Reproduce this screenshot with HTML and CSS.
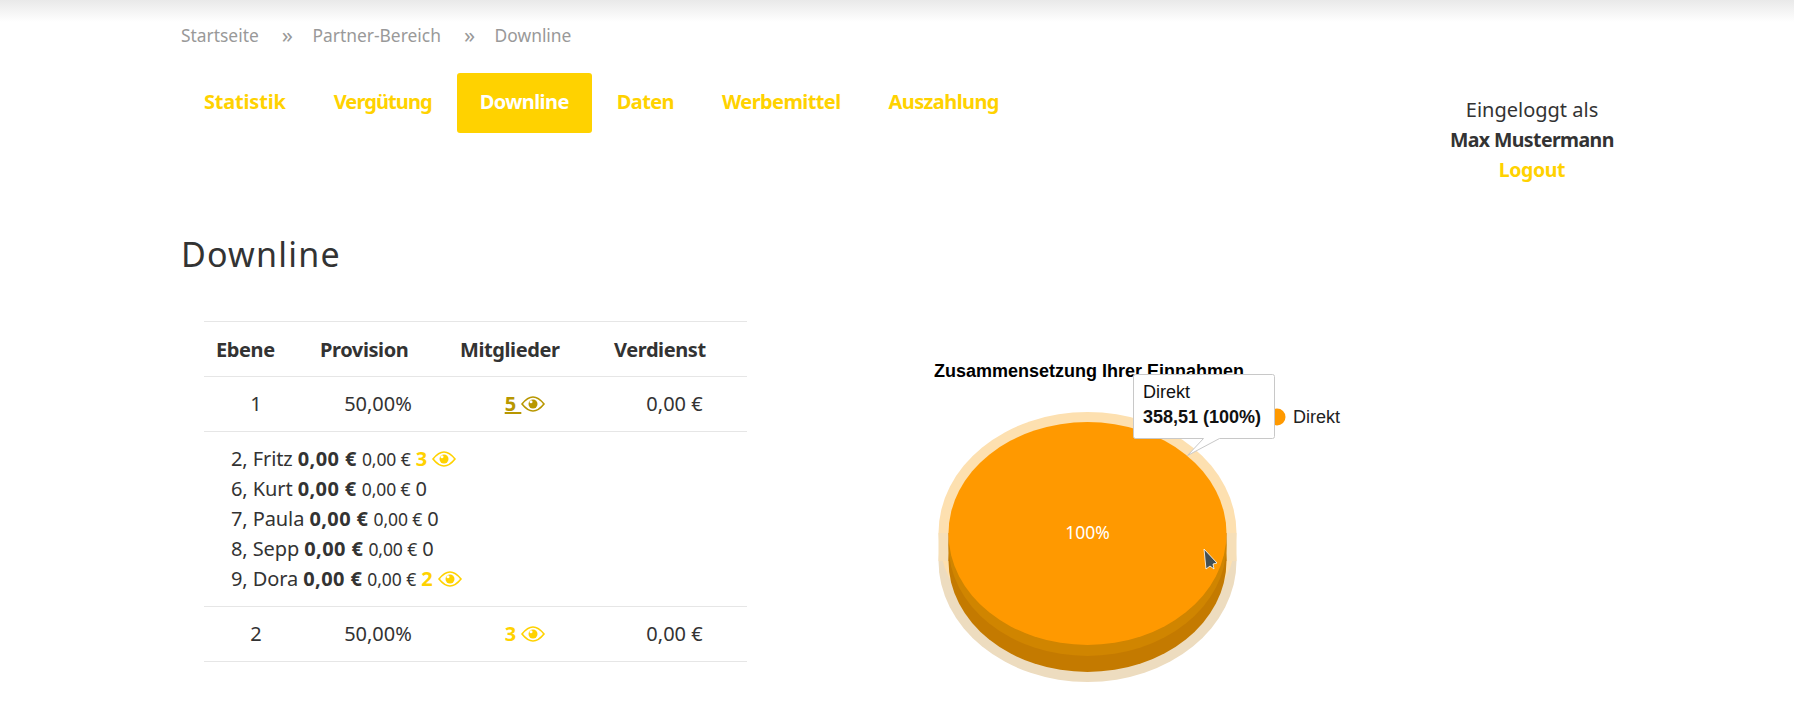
FILE: index.html
```html
<!DOCTYPE html>
<html>
<head>
    <meta charset="UTF-8">
    <title>Downline</title>
    <link rel="stylesheet" href="styles.css">
</head>
<body>
<div class="top-shadow"></div>
<div class="page">
    <div class="breadcrumb">
        <a>Startseite</a><span class="sep">»</span><a>Partner-Bereich</a><span class="sep">»</span><a>Downline</a>
    </div>
    <div class="head-row">
        <ul class="nav">
            <li>Statistik</li>
            <li>Vergütung</li>
            <li class="active">Downline</li>
            <li>Daten</li>
            <li>Werbemittel</li>
            <li>Auszahlung</li>
        </ul>
        <div class="login">
            <div>Eingeloggt als</div>
            <div class="login-name">Max Mustermann</div>
            <div class="login-out">Logout</div>
        </div>
    </div>
    <h1>Downline</h1>
    <div class="content">
        <table class="levels">
            <tr>
                <th class="col1">Ebene</th>
                <th class="col2">Provision</th>
                <th class="col3">Mitglieder</th>
                <th class="col4">Verdienst</th>
            </tr>
            <tr>
                <td>1</td>
                <td>50,00%</td>
                <td><a class="count hover"><u>5 </u><svg class="eye" viewBox="0 0 24 16"><use href="#eye"/></svg></a></td>
                <td>0,00 €</td>
            </tr>
            <tr>
                <td colspan="4" class="members">
                    <div>2, Fritz <b>0,00 €</b> <small>0,00 €</small> <a class="count">3 <svg class="eye" viewBox="0 0 24 16"><use href="#eye"/></svg></a></div>
                    <div>6, Kurt <b>0,00 €</b> <small>0,00 €</small> 0</div>
                    <div>7, Paula <b>0,00 €</b> <small>0,00 €</small> 0</div>
                    <div>8, Sepp <b>0,00 €</b> <small>0,00 €</small> 0</div>
                    <div>9, Dora <b>0,00 €</b> <small>0,00 €</small> <a class="count">2 <svg class="eye" viewBox="0 0 24 16"><use href="#eye"/></svg></a></div>
                </td>
            </tr>
            <tr>
                <td>2</td>
                <td>50,00%</td>
                <td><a class="count">3 <svg class="eye" viewBox="0 0 24 16"><use href="#eye"/></svg></a></td>
                <td>0,00 €</td>
            </tr>
        </table>
        <!-- viewBox uses page coordinates, chart starts at 880/320 -->
        <svg class="chart" viewBox="880 320 500 380">
            <text class="chart-title" x="934" y="377">Zusammensetzung Ihrer Einnahmen</text>

            <!-- halo -->
            <ellipse cx="1087.5" cy="561" rx="149" ry="121" fill="#eddcbf"/>
            <ellipse cx="1087.5" cy="533" rx="149" ry="121" fill="#fde0b0"/>
            <rect x="938.5" y="533" width="298" height="28" fill="#f6dfb8"/>
            <!-- side -->
            <ellipse cx="1087.5" cy="561" rx="139" ry="111" fill="#c47a00"/>
            <rect x="948.5" y="533" width="278" height="28" fill="#c47a00"/>
            <ellipse cx="1087.5" cy="545" rx="139" ry="111" fill="#d08500"/>
            <!-- top -->
            <ellipse cx="1087.5" cy="533.5" rx="139" ry="111.5" fill="#ff9900"/>
            <text class="pie-label" x="1087.5" y="539">100%</text>

            <circle cx="1277" cy="417" r="8.5" fill="#ff9900"/>
            <text class="legend" x="1293" y="423">Direkt</text>

            <!-- tooltip -->
            <path class="tip" d="M1135.5 374.5h137a2 2 0 0 1 2 2v60a2 2 0 0 1 -2 2h-53l-32 17 16 -17h-68a2 2 0 0 1 -2 -2v-60a2 2 0 0 1 2 -2z"/>
            <text class="tip-text" x="1143" y="398">Direkt</text>
            <text class="tip-text tip-bold" x="1143" y="423">358,51 (100%)</text>

            <!-- mouse pointer -->
            <path d="M1204 549L1217 563 1213 564 1214 569 1210 566 1206 569z" fill="#445053" stroke="#fff" stroke-width="0.800"/>
        </svg>
    </div>
</div>
<svg class="defs" width="0" height="0">
    <defs>
        <g id="eye">
            <path d="M1 8C5 3 8.500 1 12 1s7 2 11 7c-4 5-7.500 7-11 7S5 13 1 8z" fill="none" stroke="currentColor" stroke-width="1.600"/>
            <circle cx="12" cy="8" r="4.500" fill="currentColor"/>
            <circle cx="10" cy="5.800" r="1.500" fill="#fff"/>
        </g>
    </defs>
</svg>
</body>
</html>
```

FILE: styles.css
```css
html, body, div, ul, li, h1, table, tr, td, th {
    margin: 0;
    padding: 0;
    list-style: none;
}

body {
    background: #fff;
    color: #333;
    font-family: "Noto Sans", "Open Sans", sans-serif;
    font-size: 20px;
    overflow: hidden;
    height: 705px;
}

a {
    color: inherit;
    text-decoration: none;
}

.top-shadow {
    height: 22px;
    background: linear-gradient(#e9e9e9, #fff);
}

.page {
    padding-left: 181px;
}

.breadcrumb {
    height: 26px;
    line-height: 26px;
    font-size: 17.400px;
    color: #999;
    display: flex;
}

.sep {
    font-size: 22px;
    line-height: 24px;
    margin: 0 19.500px 0 23px;
}

.head-row {
    display: flex;
    margin-top: 25px;
    height: 147px;
}

.nav {
    display: flex;
    gap: 2px;
    align-items: flex-start;
    width: 1272px;
}

.nav li {
    height: 60px;
    line-height: 58px;
    padding: 0 23px;
    font-size: 20px;
    font-weight: 700;
    color: #ffd200;
    border-radius: 3px;
    letter-spacing: -0.6px;
}

.nav li:first-child {
    letter-spacing: -0.2px;
}

.nav li:nth-child(2) {
    letter-spacing: -0.9px;
}

.nav .active {
    background: #ffd200;
    color: #fff;
}

.login {
    width: 158px;
    margin-top: 22px;
    text-align: center;
    line-height: 30px;
    font-size: 20px;
    white-space: nowrap;
}

.login-name {
    font-size: 19.500px;
    font-weight: 700;
    letter-spacing: -0.6px;
    margin-left: -3px;
}

.login-out {
    font-size: 19.500px;
    font-weight: 700;
    color: #ffd200;
    letter-spacing: -0.4px;
}

h1 {
    font-size: 34px;
    font-weight: 400;
    line-height: 44px;
    margin-top: 12px;
    letter-spacing: 1.200px;
}

.content {
    display: flex;
    align-items: flex-start;
    margin: 45px 0 0 23px;
}

.levels {
    width: 543px;
    table-layout: fixed;
    border-collapse: collapse;
    flex: none;
}

.levels th, .levels td {
    border-top: 1px solid #e6e6e6;
    border-bottom: 1px solid #e6e6e6;
    height: 54px;
    font-size: 20px;
}

.levels th {
    text-align: left;
    padding-left: 12px;
    font-weight: 700;
    letter-spacing: -0.4px;
}

.levels td {
    text-align: center;
    height: 52px;
    padding-bottom: 2px;
}

.col1 { width: 92px; }
.col2 { width: 128px; }
.col3 { width: 142px; }
.col4 { width: 133px; }

.levels .members {
    text-align: left;
    padding: 12px 0 12px 27px;
    letter-spacing: -0.1px;
}

.members div {
    height: 30px;
    line-height: 30px;
}

.members b {
    letter-spacing: 0.4px;
}

small {
    font-size: 17.500px;
}

.count {
    color: #ffd200;
    font-weight: 700;
}

.count.hover {
    color: #b89700;
}

.eye {
    width: 24px;
    height: 16px;
    vertical-align: -1px;
}

.chart {
    width: 500px;
    height: 380px;
    margin: -1px 0 0 133px;
    flex: none;
}

.chart text {
    font-family: "Liberation Sans", Arial, sans-serif;
}

.chart-title {
    font-size: 18px;
    font-weight: 700;
    fill: #000;
}

.chart .pie-label {
    font-family: "Noto Sans", sans-serif;
    font-size: 17.500px;
    fill: #fff;
    text-anchor: middle;
}

.legend {
    font-size: 18px;
    fill: #222;
}

.tip {
    fill: #fff;
    stroke: #c8c8c8;
    stroke-width: 1;
}

.tip-text {
    font-size: 18px;
    fill: #111;
}

.tip-bold {
    font-weight: 700;
}

.defs {
    position: absolute;
}
```
